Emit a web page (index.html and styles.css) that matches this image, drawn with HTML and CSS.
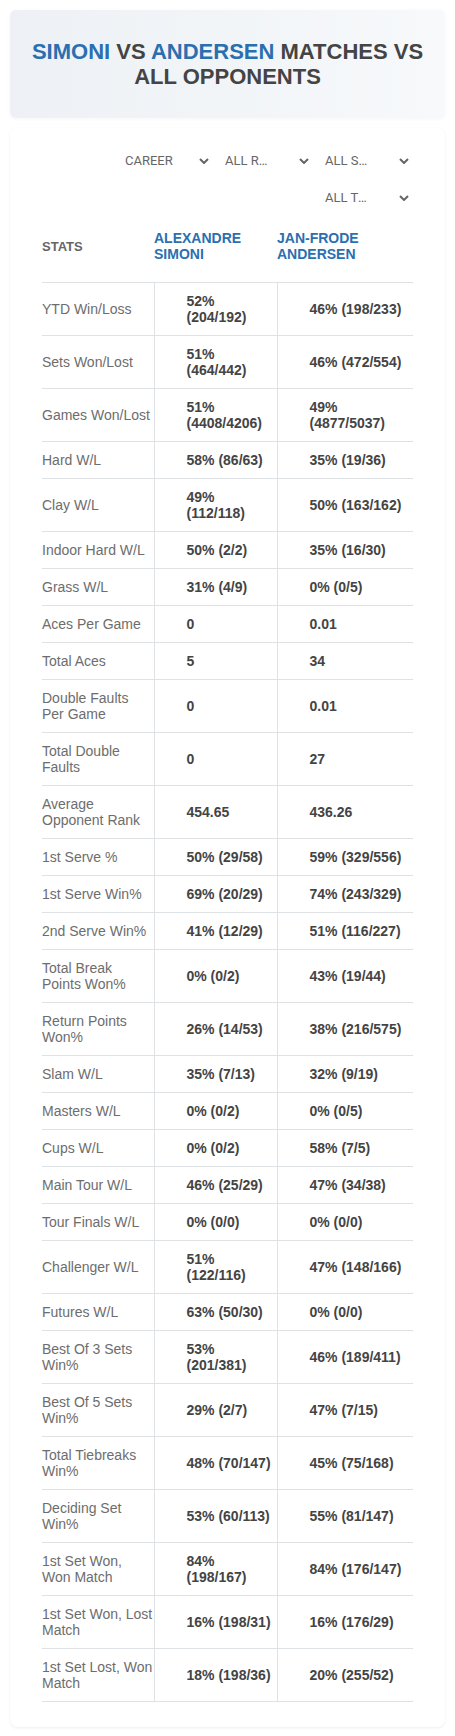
FILE: index.html
```html
<!DOCTYPE html>
<html lang="en">
  <head>
    <meta charset="UTF-8">
    <meta name="viewport" content="width=device-width, initial-scale=1.0">
    <title>Simoni vs Andersen</title>
    <link rel="stylesheet" href="styles.css">
  </head>
  <body>
    <div class="page">
      <div class="title-box">
        <h1 class="title"><span class="blue">SIMONI</span> VS <span class="blue">ANDERSEN</span> MATCHES VS ALL OPPONENTS</h1>
      </div>
      <div class="card">
        <div class="filters">
          <div class="filter"><span class="filter-text">CAREER</span><svg class="chev" viewBox="0 0 10 6"><polyline points="1,1 5,5 9,1"/></svg></div>
          <div class="filter"><span class="filter-text">ALL ROUNDS</span><svg class="chev" viewBox="0 0 10 6"><polyline points="1,1 5,5 9,1"/></svg></div>
          <div class="filter"><span class="filter-text">ALL SURFACES</span><svg class="chev" viewBox="0 0 10 6"><polyline points="1,1 5,5 9,1"/></svg></div>
          <div class="filter"><span class="filter-text">ALL TOURNAMENTS</span><svg class="chev" viewBox="0 0 10 6"><polyline points="1,1 5,5 9,1"/></svg></div>
        </div>
        <table class="stats">
          <colgroup><col class="c-label"><col class="c-p1"><col class="c-p2"></colgroup>
          <thead>
            <tr><th class="th-stats">STATS</th><th class="th-player">ALEXANDRE SIMONI</th><th class="th-player">JAN-FRODE ANDERSEN</th></tr>
          </thead>
          <tbody>
            <tr><td>YTD Win/Loss</td><td>52% (204/192)</td><td>46% (198/233)</td></tr>
            <tr><td>Sets Won/Lost</td><td>51% (464/442)</td><td>46% (472/554)</td></tr>
            <tr><td>Games Won/Lost</td><td>51% (4408/4206)</td><td>49% (4877/5037)</td></tr>
            <tr><td>Hard W/L</td><td>58% (86/63)</td><td>35% (19/36)</td></tr>
            <tr><td>Clay W/L</td><td>49% (112/118)</td><td>50% (163/162)</td></tr>
            <tr><td>Indoor Hard W/L</td><td>50% (2/2)</td><td>35% (16/30)</td></tr>
            <tr><td>Grass W/L</td><td>31% (4/9)</td><td>0% (0/5)</td></tr>
            <tr><td>Aces Per Game</td><td>0</td><td>0.01</td></tr>
            <tr><td>Total Aces</td><td>5</td><td>34</td></tr>
            <tr><td>Double Faults Per Game</td><td>0</td><td>0.01</td></tr>
            <tr><td>Total Double Faults</td><td>0</td><td>27</td></tr>
            <tr><td>Average Opponent Rank</td><td>454.65</td><td>436.26</td></tr>
            <tr><td>1st Serve %</td><td>50% (29/58)</td><td>59% (329/556)</td></tr>
            <tr><td>1st Serve Win%</td><td>69% (20/29)</td><td>74% (243/329)</td></tr>
            <tr><td>2nd Serve Win%</td><td>41% (12/29)</td><td>51% (116/227)</td></tr>
            <tr><td>Total Break Points Won%</td><td>0% (0/2)</td><td>43% (19/44)</td></tr>
            <tr><td>Return Points Won%</td><td>26% (14/53)</td><td>38% (216/575)</td></tr>
            <tr><td>Slam W/L</td><td>35% (7/13)</td><td>32% (9/19)</td></tr>
            <tr><td>Masters W/L</td><td>0% (0/2)</td><td>0% (0/5)</td></tr>
            <tr><td>Cups W/L</td><td>0% (0/2)</td><td>58% (7/5)</td></tr>
            <tr><td>Main Tour W/L</td><td>46% (25/29)</td><td>47% (34/38)</td></tr>
            <tr><td>Tour Finals W/L</td><td>0% (0/0)</td><td>0% (0/0)</td></tr>
            <tr><td>Challenger W/L</td><td>51% (122/116)</td><td>47% (148/166)</td></tr>
            <tr><td>Futures W/L</td><td>63% (50/30)</td><td>0% (0/0)</td></tr>
            <tr><td>Best Of 3 Sets Win%</td><td>53% (201/381)</td><td>46% (189/411)</td></tr>
            <tr><td>Best Of 5 Sets Win%</td><td>29% (2/7)</td><td>47% (7/15)</td></tr>
            <tr><td>Total Tiebreaks Win%</td><td>48% (70/147)</td><td>45% (75/168)</td></tr>
            <tr><td>Deciding Set Win%</td><td>53% (60/113)</td><td>55% (81/147)</td></tr>
            <tr><td>1st Set Won, Won Match</td><td>84% (198/167)</td><td>84% (176/147)</td></tr>
            <tr><td>1st Set Won, Lost Match</td><td>16% (198/31)</td><td>16% (176/29)</td></tr>
            <tr><td>1st Set Lost, Won Match</td><td>18% (198/36)</td><td>20% (255/52)</td></tr>
          </tbody>
        </table>
      </div>
    </div>
  </body>
</html>
```
FILE: styles.css
```css
html, body { margin: 0; padding: 0; background: white; }
body { font-family: "Liberation Sans", Arial, sans-serif; }
.page { padding: 10px 10px 9px; }

.title-box { padding: 29px 20px; border-radius: 6px; background: linear-gradient(90deg, #edf1f5, #f7f9fb); box-shadow: 0 1px 4px rgba(0, 0, 0, 0.04); }
.title { margin: 0; text-align: center; font-size: 22px; line-height: 25px; font-weight: bold; color: #444; }
.blue { color: #2a6fb0; }

.card { margin-top: 10px; padding: 14px 32px 25px; border-radius: 8px; background: white; box-shadow: 0 1px 3px rgba(0, 0, 0, 0.07); }

.filters { display: flex; flex-wrap: wrap; justify-content: flex-end; }
.filter { display: flex; align-items: center; width: 100px; height: 37px; padding-left: 12px; box-sizing: border-box; font-family: Roboto, sans-serif; font-size: 13px; color: #666; }
.filter-text { width: 50px; overflow: hidden; white-space: nowrap; text-overflow: ellipsis; }
.chev { width: 10px; height: 6px; margin-left: auto; margin-right: 4px; fill: none; stroke: #666; stroke-width: 2; }

.stats { width: 371px; border-collapse: collapse; table-layout: fixed; font-size: 14px; }
.c-label { width: 112px; }
.c-p1 { width: 123px; }
.c-p2 { width: 136px; }
.stats th { padding: 14px 0 20px; text-align: left; vertical-align: middle; border-bottom: 1px solid #dfe2e5; }
.th-stats { font-size: 13px; color: #666; }
.th-player { color: #2a6fb0; }
.stats td { padding: 10px 4px 10px 32px; border-bottom: 1px solid #dfe2e5; border-left: 1px solid #dfe2e5; font-weight: bold; color: #444; vertical-align: middle; }
.stats td:first-child { padding: 10px 0; border-left: none; font-weight: normal; color: #6d6d6d; }
```
